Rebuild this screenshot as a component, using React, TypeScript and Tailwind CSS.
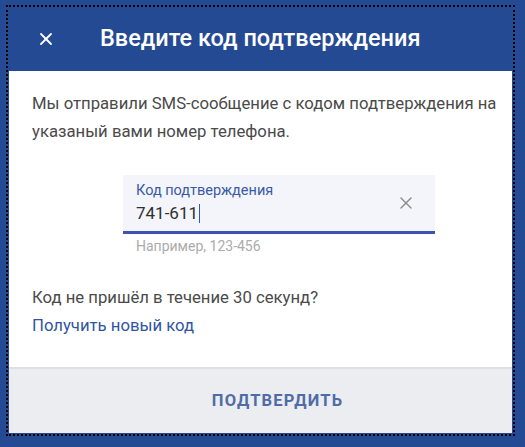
import { X } from 'lucide-react';

export default function App() {
  return (
    <div className="h-[447px] w-[525px] overflow-hidden bg-[#244a93] pt-[5px] pl-[6px] font-['Roboto',sans-serif]">
      <div className="flex h-[431px] w-[509px] flex-col border-2 border-dotted border-black px-px pb-px">
        {/* header */}
        <div className="flex h-[64px] shrink-0 items-center text-white">
          <button className="ml-[27px] flex h-[20px] w-[20px] items-center justify-center">
            <X size={20} strokeWidth={2.2} />
          </button>
          <h1 className="ml-[44px] text-[23.5px] font-medium leading-none">Введите код подтверждения</h1>
        </div>

        {/* body */}
        <div className="flex-1 bg-white pl-[23px] pt-[19px]">
          <p className="text-[16.7px] leading-[28px] text-[#4a4a4a]">
            Мы отправили SMS-сообщение с кодом подтверждения на указаный вами номер телефона.
          </p>

          <div className="ml-[91px] mt-[29px] w-[312px]">
            <div className="relative h-[59px] border-b-[3px] border-[#3f53ad] bg-[#f3f5fa] pl-[13px]">
              <div className="pt-[7px] text-[14.5px] leading-[17px] text-[#3a5aa6]">Код подтверждения</div>
              <div className="mt-[4px] flex items-center text-[17px] leading-[20px] text-[#2f2f2f]">
                741-611<span className="ml-px inline-block h-[19px] w-px bg-[#3f53ad]" />
              </div>
              <X size={20} strokeWidth={1.6} className="absolute right-[19px] top-[18px] text-[#8a8a8a]" />
            </div>
            <div className="mt-[4px] pl-[13px] text-[14px] leading-[17px] text-[#ababab]">Например, 123-456</div>
          </div>

          <p className="mt-[29px] text-[16.7px] leading-[28px] text-[#4a4a4a]">Код не пришёл в течение 30 секунд?</p>
          <a className="block text-[16.7px] leading-[28px] text-[#2f55a3]">Получить новый код</a>
        </div>

        {/* footer */}
        <div className="flex h-[66px] shrink-0 items-center justify-center border-t-2 border-[#dcdfe5] bg-[#ecedf1] pl-[34px]">
          <span className="text-[16.5px] font-bold tracking-[1.2px] text-[#4f6ca7]">ПОДТВЕРДИТЬ</span>
        </div>
      </div>
    </div>
  );
}
